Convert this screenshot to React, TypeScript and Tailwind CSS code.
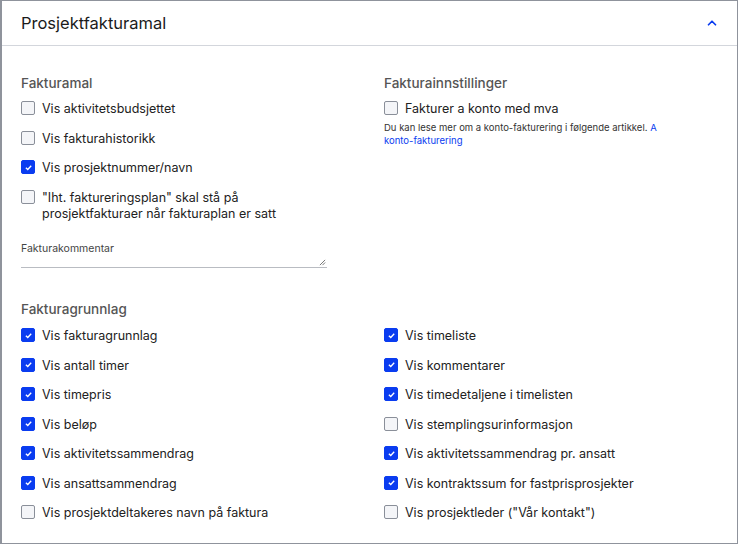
import { ChevronUp } from "lucide-react"

function Check({ label, checked }: { label: string; checked?: boolean }) {
  return (
    <label className="flex items-start gap-[7px] text-[12.5px] leading-[16px] text-[#222]">
      <span
        className={`flex h-[14px] w-[14px] shrink-0 items-center justify-center rounded-[2px] border ${
          checked ? "border-[#0a3cf0] bg-[#0a3cf0]" : "border-[#8a8f99] bg-[#f4f5f8]"
        }`}
      >
        {checked && (
          <svg viewBox="0 0 12 12" className="h-[9px] w-[9px]" fill="none" stroke="white" strokeWidth="1.8">
            <path d="M2.5 6.3 L5 8.6 L9.6 3.6" />
          </svg>
        )}
      </span>
      <span>{label}</span>
    </label>
  )
}

export default function App() {
  const grunnlagLeft = [
    ["Vis fakturagrunnlag", true],
    ["Vis antall timer", true],
    ["Vis timepris", true],
    ["Vis beløp", true],
    ["Vis aktivitetssammendrag", true],
    ["Vis ansattsammendrag", true],
    ["Vis prosjektdeltakeres navn på faktura", false],
  ] as const
  const grunnlagRight = [
    ["Vis timeliste", true],
    ["Vis kommentarer", true],
    ["Vis timedetaljene i timelisten", true],
    ["Vis stemplingsurinformasjon", false],
    ["Vis aktivitetssammendrag pr. ansatt", true],
    ["Vis kontraktssum for fastprisprosjekter", true],
    ["Vis prosjektleder (\"Vår kontakt\")", false],
  ] as const

  return (
    <div className="h-[545px] w-[738px] bg-white" style={{ fontFamily: "Inter, 'Noto Sans', sans-serif" }}>
      <div className="h-[544px] border border-l-2 border-[#8f939c] bg-white">
        <div className="flex h-[45px] items-center justify-between border-b border-[#d3d6dc] pl-[19px] pr-[18px]">
          <h1 className="text-[16.5px] text-[#1b1b1b]">Prosjektfakturamal</h1>
          <ChevronUp className="h-[14px] w-[14px] text-[#0a3cf0]" strokeWidth={3} />
        </div>

        <div className="grid grid-cols-[363px_1fr] pl-[19px] pr-[18px] pt-[27px]">
          <div className="w-[306px]">
            <h2 className="mb-[8px] text-[13.5px] font-medium text-[#555]">Fakturamal</h2>
            <div className="flex flex-col gap-[13.5px]">
              <Check label="Vis aktivitetsbudsjettet" />
              <Check label="Vis fakturahistorikk" />
              <Check label="Vis prosjektnummer/navn" checked />
              <Check label={'"Iht. faktureringsplan" skal stå på prosjektfakturaer når fakturaplan er satt'} />
            </div>
            <div className="relative mt-[19px] h-[27px] border-b border-[#b9bcc2] text-[10.5px] text-[#444]">
              Fakturakommentar
              <svg viewBox="0 0 8 8" className="absolute bottom-[1px] right-[1px] h-[7px] w-[7px]" stroke="#555" strokeWidth="0.9">
                <path d="M1 7 L7 1 M4 7 L7 4" />
              </svg>
            </div>
          </div>
          <div>
            <h2 className="mb-[8px] text-[13.5px] font-medium text-[#555]">Fakturainnstillinger</h2>
            <Check label="Fakturer a konto med mva" />
            <p className="mt-[4px] w-[300px] text-[9.5px] leading-[13px] text-[#333]">
              Du kan lese mer om a konto-fakturering i følgende artikkel.{" "}
              <span className="text-[#0a3cf0]">A konto-fakturering</span>
            </p>
          </div>
        </div>

        <div className="pl-[19px] pr-[18px] pt-[31px]">
          <h2 className="mb-[9px] text-[13.5px] font-medium text-[#555]">Fakturagrunnlag</h2>
          <div className="grid grid-cols-[363px_1fr]">
            <div className="flex flex-col gap-[13.5px]">
              {grunnlagLeft.map(([l, c]) => (
                <Check key={l} label={l} checked={c} />
              ))}
            </div>
            <div className="flex flex-col gap-[13.5px]">
              {grunnlagRight.map(([l, c]) => (
                <Check key={l} label={l} checked={c} />
              ))}
            </div>
          </div>
        </div>
      </div>
    </div>
  )
}
